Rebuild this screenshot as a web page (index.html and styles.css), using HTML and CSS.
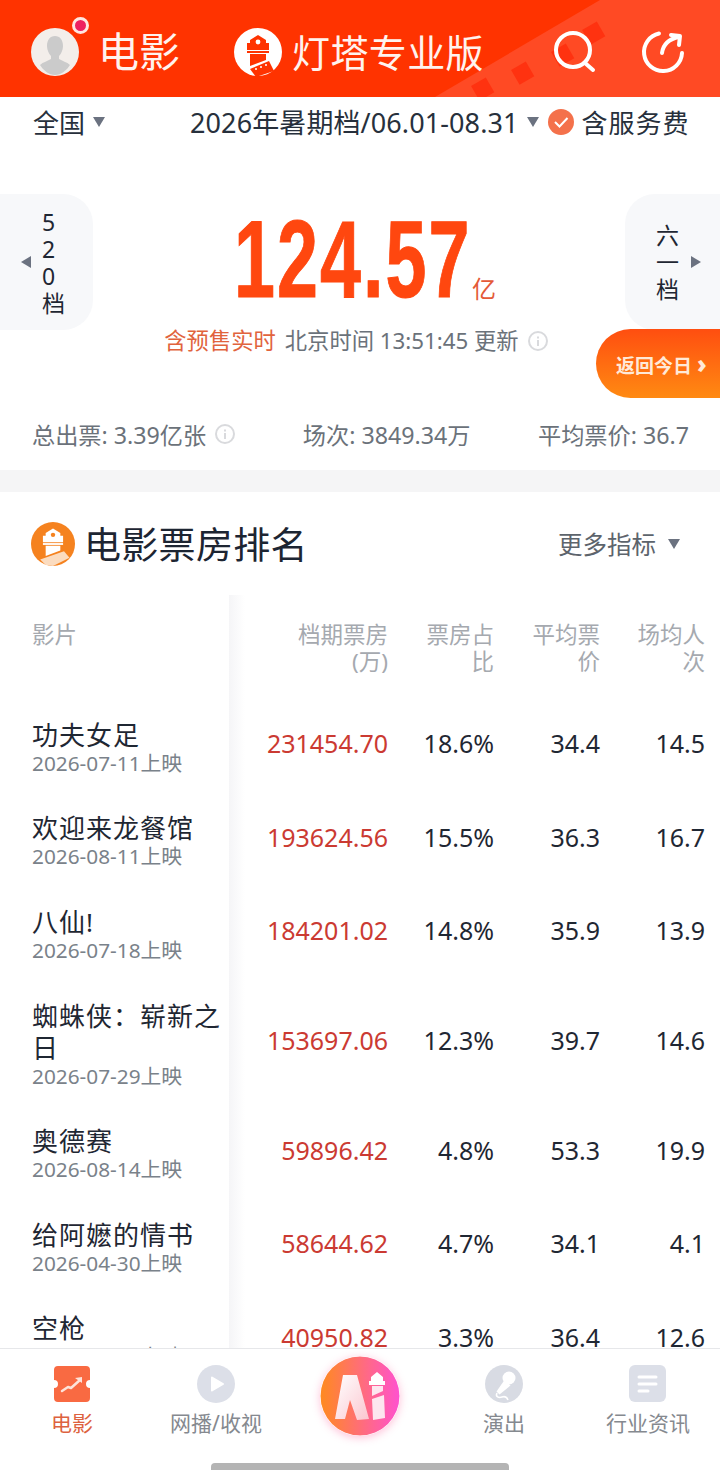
FILE: index.html
```html
<!DOCTYPE html>
<html lang="en">
<head>
  <meta charset="UTF-8">
  <meta name="viewport" content="width=device-width, initial-scale=1">
  <title>电影票房</title>
  <link rel="stylesheet" href="styles.css">
</head>
<body>
<div class="app">

  <header class="top-bar">
    <!-- film strip running across the right of the bar -->
    <svg class="top-strip" width="720" height="97" viewBox="0 0 720 97">
      <polygon points="435,97 600,0 720,0 720,97" fill="#ff4a24"/>
      <g fill="#ff3210">
        <rect x="585" y="25" width="17" height="17" transform="rotate(-30 593 33)"/>
        <rect x="554" y="47" width="17" height="17" transform="rotate(-30 562 55)"/>
        <rect x="514" y="65" width="17" height="17" transform="rotate(-30 522 73)"/>
        <rect x="474" y="81" width="17" height="17" transform="rotate(-30 482 89)"/>
      </g>
    </svg>

    <div class="avatar">
      <svg width="50" height="50" viewBox="0 0 50 50">
        <circle cx="25" cy="25" r="24" fill="#f3eeea"/>
        <path d="M25 9c-5 0-8 4-8 10 0 4 2 8 4 10v3c-3 2-8 3-11 6 3 5 9 10 15 10s12-5 15-10c-3-3-8-4-11-6v-3c2-2 4-6 4-10 0-6-3-10-8-10z" fill="#cbcbcb"/>
      </svg>
      <span class="avatar-dot"></span>
    </div>
    <span class="top-title">电影</span>

    <div class="brand">
      <svg width="48" height="48" viewBox="0 0 48 48">
        <circle cx="24" cy="24" r="24" fill="#fff"/>
        <path d="M13 22v-7h3v-3l8-5 8 5v3h3v7z" fill="#ff3300"/>
        <circle cx="24" cy="14" r="2.4" fill="#fff"/>
        <rect x="13" y="23" width="22" height="2" fill="#ff3300"/>
        <polygon points="16,26 32,26 32,32 16,38" fill="#ff3300"/>
        <polygon points="16,41 35,33 40,43 22,49" fill="#ff3300"/>
        <g fill="#fff">
          <circle cx="22" cy="41" r="1"/><circle cx="27" cy="39" r="1"/><circle cx="32" cy="37" r="1"/>
        </g>
      </svg>
      <span class="brand-name">灯塔专业版</span>
    </div>

    <div class="top-actions">
      <svg width="44" height="44" viewBox="0 0 44 44" fill="none" stroke="#fff" stroke-width="4" stroke-linecap="round">
        <circle cx="21" cy="20" r="17"/>
        <path d="M33 33l8 7"/>
      </svg>
      <svg width="44" height="44" viewBox="0 0 44 44" fill="none" stroke="#fff" stroke-width="4" stroke-linecap="round" stroke-linejoin="round">
        <path d="M18 3.500A19 19 0 1 0 41 23"/>
        <path d="M21 23c1-8 7-14 17-16"/>
        <path d="M30 5l9 1-1 9"/>
      </svg>
    </div>
  </header>

  <div class="filter-row">
    <span class="filter-area">全国</span>
    <span class="caret"></span>
    <span class="filter-period">2026年暑期档/06.01-08.31</span>
    <span class="caret"></span>
    <svg class="check" width="26" height="26" viewBox="0 0 26 26">
      <circle cx="13" cy="13" r="13" fill="#f4714b"/>
      <path d="M7 13l4.500 4.500L19.500 9" fill="none" stroke="#fff" stroke-width="2"/>
    </svg>
    <span class="filter-fee">含服务费</span>
  </div>

  <section class="hero">
    <div class="period-btn period-prev">
      <span class="arrow-left"></span>
      <span class="period-text">520档</span>
    </div>
    <div class="hero-center">
      <div class="total">
        <div class="total-box"><span class="total-num">124.57</span></div>
        <span class="total-unit">亿</span>
      </div>
      <div class="update-line">
        <span class="update-tag">含预售实时</span>
        <span>北京时间 13:51:45 更新</span>
        <svg class="info" width="20" height="20" viewBox="0 0 20 20"><use href="#icon-info"/></svg>
      </div>
    </div>
    <div class="period-btn period-next">
      <span class="period-text">六一档</span>
      <span class="arrow-right"></span>
    </div>
    <div class="back-today">返回今日 <b>›</b></div>
  </section>

  <div class="stats">
    <span class="stat">总出票: 3.39亿张 <svg class="info" width="20" height="20" viewBox="0 0 20 20"><use href="#icon-info"/></svg></span>
    <span class="stat">场次: 3849.34万</span>
    <span class="stat">平均票价: 36.7</span>
  </div>

  <div class="band"></div>

  <section class="rank">
    <div class="rank-head">
      <svg width="44" height="44" viewBox="0 0 48 48">
        <circle cx="24" cy="24" r="24" fill="#f5821f"/>
        <path d="M13 22v-7h3v-3l8-5 8 5v3h3v7z" fill="#fff"/>
        <circle cx="24" cy="14" r="2.4" fill="#f5821f"/>
        <rect x="13" y="23" width="22" height="2" fill="#fff"/>
        <polygon points="16,26 32,26 32,31 16,37" fill="#fff"/>
        <polygon points="10,41 36,32 42,39 24,48 16,47" fill="#fbdcc0"/>
      </svg>
      <h2 class="rank-title">电影票房排名</h2>
      <span class="rank-more">更多指标</span>
      <span class="caret"></span>
    </div>

    <div class="table">
      <div class="row row-head">
        <div class="cell-name">影片</div>
        <div class="cell">档期票房<br>(万)</div>
        <div class="cell">票房占<br>比</div>
        <div class="cell">平均票<br>价</div>
        <div class="cell">场均人<br>次</div>
      </div>

      <div class="row">
        <div class="cell-name"><div class="film">功夫女足</div><div class="date">2026-07-11上映</div></div>
        <div class="cell money">231454.70</div><div class="cell">18.6%</div><div class="cell">34.4</div><div class="cell">14.5</div>
      </div>
      <div class="row">
        <div class="cell-name"><div class="film">欢迎来龙餐馆</div><div class="date">2026-08-11上映</div></div>
        <div class="cell money">193624.56</div><div class="cell">15.5%</div><div class="cell">36.3</div><div class="cell">16.7</div>
      </div>
      <div class="row">
        <div class="cell-name"><div class="film">八仙!</div><div class="date">2026-07-18上映</div></div>
        <div class="cell money">184201.02</div><div class="cell">14.8%</div><div class="cell">35.9</div><div class="cell">13.9</div>
      </div>
      <div class="row">
        <div class="cell-name"><div class="film">蜘蛛侠：崭新之日</div><div class="date">2026-07-29上映</div></div>
        <div class="cell money">153697.06</div><div class="cell">12.3%</div><div class="cell">39.7</div><div class="cell">14.6</div>
      </div>
      <div class="row">
        <div class="cell-name"><div class="film">奥德赛</div><div class="date">2026-08-14上映</div></div>
        <div class="cell money">59896.42</div><div class="cell">4.8%</div><div class="cell">53.3</div><div class="cell">19.9</div>
      </div>
      <div class="row">
        <div class="cell-name"><div class="film">给阿嬷的情书</div><div class="date">2026-04-30上映</div></div>
        <div class="cell money">58644.62</div><div class="cell">4.7%</div><div class="cell">34.1</div><div class="cell">4.1</div>
      </div>
      <div class="row">
        <div class="cell-name"><div class="film">空枪</div><div class="date">2026-08-01上映</div></div>
        <div class="cell money">40950.82</div><div class="cell">3.3%</div><div class="cell">36.4</div><div class="cell">12.6</div>
      </div>

      <div class="frozen-edge"></div>
    </div>
  </section>

  <nav class="tab-bar">
    <div class="tab tab-on">
      <svg class="ticket" width="38" height="36" viewBox="0 0 38 36">
        <path d="M5 0h28a4 4 0 0 1 4 4v10a4 4 0 0 0 0 8v10a4 4 0 0 1-4 4H5a4 4 0 0 1-4-4V22a4 4 0 0 0 0-8V4a4 4 0 0 1 4-4z" fill="#f96a42"/>
        <path d="M9 25l6-4 3 1 9-8" fill="none" stroke="#fde3d9" stroke-width="2.500" stroke-linecap="round" stroke-linejoin="round"/>
        <path d="M22 12l7-1v6z" fill="#fde3d9"/>
      </svg>
      <span>电影</span>
    </div>
    <div class="tab">
      <svg width="38" height="38" viewBox="0 0 38 38">
        <circle cx="19" cy="19" r="19" fill="#dcdfe8"/>
        <path d="M15 12.500l11 6.500-11 6.500z" fill="#fff" stroke="#fff" stroke-width="2" stroke-linejoin="round"/>
      </svg>
      <span>网播/收视</span>
    </div>
    <div class="tab tab-ai">
      <svg width="80" height="80" viewBox="0 0 80 80">
        <defs>
          <linearGradient id="ai-bg" x1="0" y1="0" x2="1" y2="0">
            <stop offset="0" stop-color="#ff8a1f"/>
            <stop offset="1" stop-color="#ff52cf"/>
          </linearGradient>
          <linearGradient id="ai-a" x1="0" y1="0" x2="1" y2="1">
            <stop offset="0" stop-color="#fff"/>
            <stop offset="1" stop-color="#fbc6cf"/>
          </linearGradient>
        </defs>
        <circle cx="40" cy="40" r="39.500" fill="url(#ai-bg)"/>
        <path d="M23 19h14l12 44-12 1-7-20-5 19H15z" fill="url(#ai-a)"/>
        <path d="M51 25v-4l6-5 6 5v4h2v4H49v-4z" fill="#fff"/>
        <path d="M52 30h11v5l-11 5zM52 43l12-4 1 23-12 2z" fill="#fde6ef"/>
      </svg>
    </div>
    <div class="tab">
      <svg width="38" height="38" viewBox="0 0 38 38">
        <circle cx="19" cy="19" r="19" fill="#d8dbe3"/>
        <circle cx="24" cy="13" r="6.500" fill="#fff"/>
        <path d="M19.500 15l6 5.500-11 9-3-3z" fill="#fff"/>
        <path d="M12 28c-2 4 2 5 5 4s5 0 6 3" fill="none" stroke="#fff" stroke-width="1.500"/>
      </svg>
      <span>演出</span>
    </div>
    <div class="tab">
      <svg width="38" height="38" viewBox="0 0 38 38">
        <rect width="37" height="37" rx="6" fill="#dcdfe8"/>
        <path d="M10 12h17M10 19h17M10 26h9" stroke="#fff" stroke-width="3" stroke-linecap="round"/>
      </svg>
      <span>行业资讯</span>
    </div>
  </nav>
  <div class="home-bar"></div>

  <svg width="0" height="0" class="defs">
    <symbol id="icon-info" viewBox="0 0 20 20">
      <circle cx="10" cy="10" r="9" fill="none" stroke="#d9dadd" stroke-width="2"/>
      <rect x="9" y="9" width="2" height="6" fill="#d9dadd"/>
      <rect x="9" y="5.500" width="2" height="2" fill="#d9dadd"/>
    </symbol>
  </svg>
</div>
</body>
</html>
```
FILE: styles.css
```css
* {
  box-sizing: border-box;
}

body {
  margin: 0;
  background: #fff;
  font-family: "Noto Sans", "Noto Sans CJK SC", sans-serif;
  color: #1f2733;
}

.app {
  position: relative;
  width: 720px;
  height: 1470px;
  overflow: hidden;
  background: #fff;
}

.defs {
  position: absolute;
}

/* top bar */
.top-bar {
  position: relative;
  height: 97px;
  background: #ff3300;
  display: flex;
  align-items: center;
  padding: 6px 0 0 30px;
  color: #fff;
}

.top-strip {
  position: absolute;
  left: 0;
  top: 0;
}

.avatar {
  position: relative;
  width: 50px;
  height: 50px;
}

.avatar svg {
  display: block;
}

.avatar-dot {
  position: absolute;
  right: -9px;
  top: -10px;
  width: 17px;
  height: 17px;
  border-radius: 50%;
  background: #ee2060;
  border: 3px solid #ffe6e0;
}

.top-title {
  position: relative;
  margin: -2px 0 0 18px;
  font-size: 41px;
  line-height: 50px;
  color: #fff3ee;
}

.brand {
  position: relative;
  display: flex;
  align-items: center;
  margin-left: 54px;
}

.brand-name {
  margin-left: 10px;
  font-size: 38px;
  line-height: 50px;
  color: #fff3ee;
  letter-spacing: 0.4px;
}

.top-actions {
  position: relative;
  display: flex;
  gap: 45px;
  margin-left: auto;
  margin-right: 35px;
}

/* filter row */
.filter-row {
  height: 53px;
  display: flex;
  align-items: center;
  padding: 0 0 4px 33px;
  font-size: 26px;
  color: #27303c;
  white-space: nowrap;
}

.caret {
  width: 0;
  height: 0;
  border-left: 6px solid transparent;
  border-right: 6px solid transparent;
  border-top: 10px solid #6b7280;
  margin-left: 8px;
}

.filter-period {
  margin-left: 85px;
  font-size: 27px;
  letter-spacing: 0.1px;
}

.check {
  margin-left: 9px;
}

.filter-fee {
  margin-left: 8px;
  letter-spacing: 1px;
}

/* total box office */
.hero {
  position: relative;
  display: flex;
  justify-content: space-between;
  margin-top: 44px;
  height: 204px;
}

.period-btn {
  height: 136px;
  background: #f7f8fa;
  display: flex;
  align-items: center;
}

.period-prev {
  width: 93px;
  border-radius: 0 30px 30px 0;
  padding-left: 21px;
  gap: 11px;
}

.period-prev .period-text {
  margin-top: 2px;
}

.period-next {
  width: 95px;
  border-radius: 30px 0 0 30px;
  padding-left: 31px;
  gap: 11px;
}

.period-text {
  width: 24px;
  font-size: 23px;
  line-height: 27px;
  word-break: break-all;
}

.arrow-left {
  border-top: 6px solid transparent;
  border-bottom: 6px solid transparent;
  border-right: 10px solid #6b7280;
}

.arrow-right {
  border-top: 6px solid transparent;
  border-bottom: 6px solid transparent;
  border-left: 10px solid #6b7280;
}

.hero-center {
  display: flex;
  flex-direction: column;
  align-items: center;
  width: 532px;
}

.total {
  display: flex;
  align-items: flex-end;
  height: 110px;
  margin-top: 10px;
  padding-left: 12px;
}

.total-box {
  width: 234px;
  height: 110px;
}

/* no condensed face installed, so the number is squeezed */
.total-num {
  display: inline-block;
  font-family: "Liberation Sans", sans-serif;
  font-size: 110px;
  line-height: 110px;
  font-weight: 700;
  letter-spacing: 3px;
  color: #ff470f;
  white-space: nowrap;
  transform: scaleX(0.67);
  transform-origin: left center;
  -webkit-text-stroke: 1px #ff470f;
}

.total-unit {
  margin-left: 4px;
  margin-bottom: 9px;
  font-size: 24px;
  line-height: 32px;
  color: #e45a38;
}

.update-line {
  display: flex;
  align-items: center;
  margin-top: 12px;
  padding-right: 6px;
  font-size: 22.3px;
  line-height: 30px;
  color: #6b727a;
  gap: 9px;
  white-space: nowrap;
}

.update-tag {
  color: #e1633d;
}

.back-today {
  position: absolute;
  right: 0;
  top: 135px;
  width: 124px;
  height: 69px;
  border-radius: 35px 0 0 35px;
  background: linear-gradient(180deg, #ff4e10, #ff8a12);
  color: #ffe9d8;
  font-size: 19px;
  font-weight: 700;
  line-height: 69px;
  padding-left: 20px;
  white-space: nowrap;
}

.back-today b {
  font-size: 24px;
}

/* summary numbers */
.stats {
  height: 72px;
  display: flex;
  justify-content: space-between;
  align-items: center;
  padding: 0 31px 0 32px;
  font-size: 23.2px;
  color: #6b727a;
}

.stat {
  display: flex;
  align-items: center;
  gap: 9px;
  white-space: nowrap;
}

.band {
  height: 22px;
  background: #f5f5f6;
}

/* ranking */
.rank-head {
  height: 103px;
  display: flex;
  align-items: center;
  padding: 0 40px 0 31px;
}

.rank-title {
  margin: 2px 0 0 9px;
  font-size: 37px;
  font-weight: 400;
  line-height: 50px;
  letter-spacing: 0.3px;
  color: #1d2532;
}

.rank-more {
  margin-left: auto;
  font-size: 24.5px;
  color: #5d646c;
}

.rank-head .caret {
  margin-left: 12px;
}

.table {
  position: relative;
}

.frozen-edge {
  position: absolute;
  left: 229px;
  top: 0;
  bottom: 0;
  width: 16px;
  background: linear-gradient(90deg, #f5f5f7, #fff);
}

.row {
  display: grid;
  grid-template-columns: 230px 158px 106px 106px 105px;
  align-items: center;
  padding: 18.8px 0;
}

.row-head {
  align-items: start;
  height: 105px;
  padding: 26px 0 0;
  font-size: 22.5px;
  line-height: 27px;
  color: #a5a9af;
}

.row-head .cell {
  font-size: 22.5px;
  margin-bottom: 0;
}

.cell-name {
  padding: 0 5px 0 32px;
}

.cell {
  text-align: right;
  font-size: 25px;
  white-space: nowrap;
  margin-bottom: 7px;
}

.money {
  color: #cb3a32;
}

.film {
  font-size: 26px;
  line-height: 32px;
  letter-spacing: 1px;
  color: #1f2733;
}

.date {
  font-size: 20.8px;
  line-height: 24px;
  color: #7a828a;
  white-space: nowrap;
}

/* bottom tabs */
.tab-bar {
  position: absolute;
  left: 0;
  right: 0;
  top: 1348px;
  bottom: 0;
  display: grid;
  grid-template-columns: repeat(5, 144px);
  background: #fff;
  border-top: 1px solid #e6e7ea;
}

.tab {
  display: flex;
  flex-direction: column;
  align-items: center;
  padding-top: 16px;
  font-size: 21px;
  line-height: 30px;
  color: #85898f;
}

.tab span {
  margin-top: 5px;
}

.tab-on {
  color: #dd6240;
}

.ticket {
  margin: 1px 0;
}

.tab-ai {
  padding-top: 7px;
}

.tab-ai svg {
  border-radius: 50%;
  box-shadow: 0 2px 8px rgba(255, 120, 170, 0.45);
}

.home-bar {
  position: absolute;
  left: 211px;
  bottom: 0;
  width: 298px;
  height: 7px;
  border-radius: 4px 4px 0 0;
  background: #b4b4b4;
}
```
